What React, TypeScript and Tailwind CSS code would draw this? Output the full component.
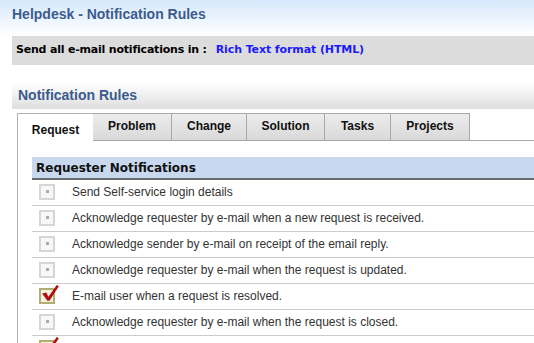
import React from "react";

const rows: { text: string; checked: boolean }[] = [
  { text: "Send Self-service login details", checked: false },
  { text: "Acknowledge requester by e-mail when a new request is received.", checked: false },
  { text: "Acknowledge sender by e-mail on receipt of the email reply.", checked: false },
  { text: "Acknowledge requester by e-mail when the request is updated.", checked: false },
  { text: "E-mail user when a request is resolved.", checked: true },
  { text: "Acknowledge requester by e-mail when the request is closed.", checked: false },
  { text: "", checked: true },
];

function Box({ checked }: { checked: boolean }) {
  if (checked) {
    return (
      <div className="relative w-[16px] h-[16px] border-2 border-[#b3ad72] bg-[#f4f2e4]">
        <svg className="absolute -left-[1px] -top-[7px]" width="21" height="21" viewBox="0 0 20 20">
          <path d="M2 10 L6 9 L8 13 L16 2 L18 3 L9 17 L7 17 Z" fill="#b01010" />
        </svg>
      </div>
    );
  }
  return (
    <div className="w-[16px] h-[16px] border-2 border-[#d6d6d6] bg-[#f7f7f7] flex items-center justify-center">
      <div className="w-[3px] h-[3px] bg-[#aaa]" />
    </div>
  );
}

const tabs = ["Problem", "Change", "Solution", "Tasks", "Projects"];
const tabW = ["w-[79px]", "w-[75px]", "w-[78px]", "w-[66px]", "w-[79px]"];

export default function App() {
  return (
    <div className="w-[534px] h-[343px] overflow-hidden bg-white font-['Liberation_Sans',Arial,sans-serif]">
      <div className="h-[36px] bg-gradient-to-b from-[#d6e8fb] to-white pl-[12px] pt-[5px]">
        <div className="text-[14px] font-bold text-[#3b5b8f] leading-[18px]">Helpdesk - Notification Rules</div>
      </div>
      <div className="ml-[12px] h-[29px] bg-[#dcdcdc] pl-[4px] flex items-center font-['DejaVu_Sans',Verdana,sans-serif] font-bold text-[11px] text-black">
        <span className="tracking-[-0.2px]">Send all e-mail notifications in :</span>
        <span className="ml-[9px] text-[#1a1aff] tracking-[-0.1px]">Rich Text format (HTML)</span>
      </div>
      <div className="ml-[12px] mt-[18px] h-[26px] bg-gradient-to-b from-white to-[#dedede] pl-[6px] flex items-center">
        <span className="text-[14px] font-bold text-[#3b5b8f] -mt-[2px]">Notification Rules</span>
      </div>
      <div className="ml-[17px] mt-[4px] flex items-end h-[28px]">
        <div className="w-[76px] h-[29px] bg-white border-l border-t border-[#b0b0b0] flex items-center justify-center pt-[4px] text-[12px] font-bold text-[#111] relative z-10 -mb-[1px]">
          Request
        </div>
        {tabs.map((t, i) => (
          <div
            key={t}
            className={`${tabW[i]} h-[28px] bg-gradient-to-b from-[#ececec] to-[#d9d9d9] border-t border-r border-b border-[#a8a8a8] flex items-center justify-center pb-[2px] text-[12px] font-bold text-[#111]`}
          >
            {t}
          </div>
        ))}
        <div className="flex-1 h-[28px] border-b border-[#a8a8a8]" />
      </div>
      <div className="ml-[17px] border-l border-[#b0b0b0] pl-[14px] pt-[16px] h-[300px]">
        <div className="h-[23px] bg-[#c8d8ee] border-b-2 border-[#6a6a6a] pl-[4px] flex items-center font-['DejaVu_Sans',Verdana,sans-serif] font-bold text-[12px] text-[#111]">
          Requester Notifications
        </div>
        {rows.map((r, i) => (
          <div key={i} className="h-[26px] border-b border-[#cccccc] flex items-center">
            <div className="w-[40px] pl-[7px] flex items-center -mt-[2px]">
              <Box checked={r.checked} />
            </div>
            <span className="text-[12px] text-[#333] -mt-[2px]">{r.text}</span>
          </div>
        ))}
      </div>
    </div>
  );
}
